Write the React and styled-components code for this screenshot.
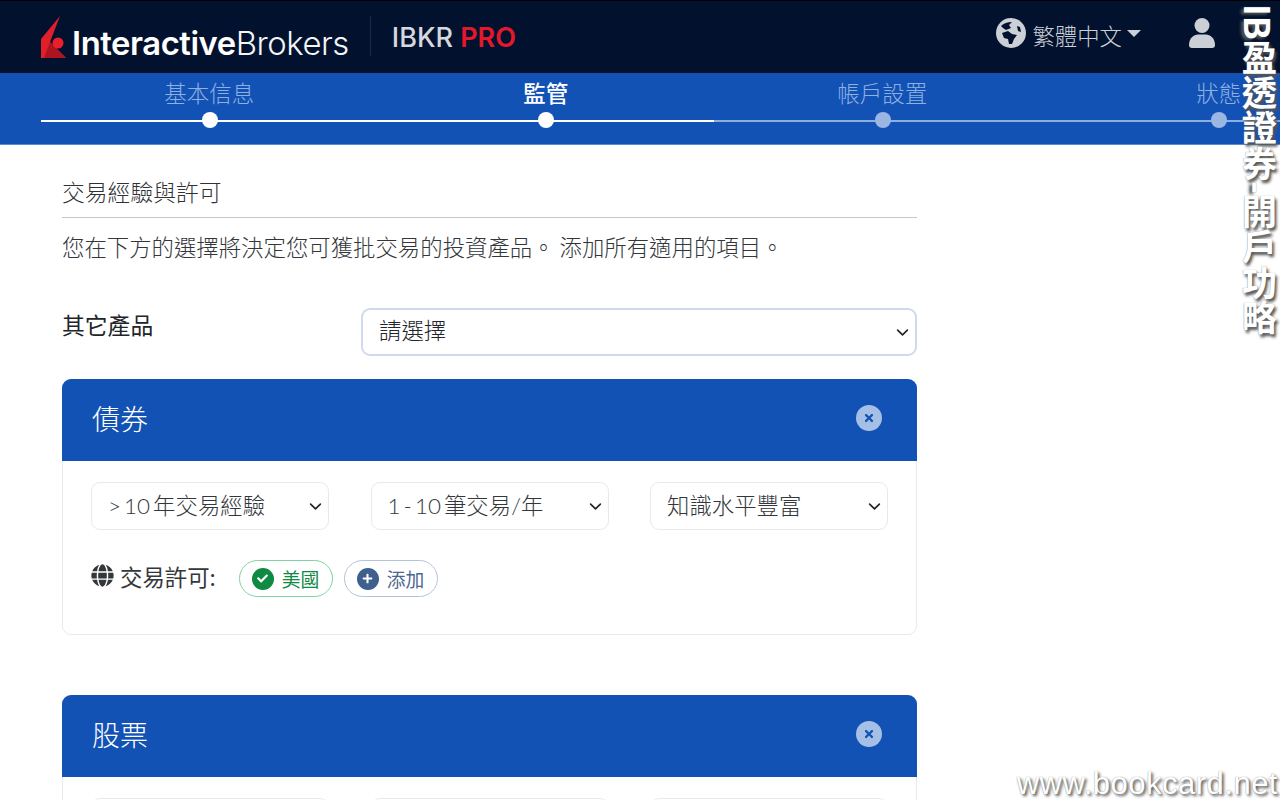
import React from "react";
import styled, { createGlobalStyle } from "styled-components";
import { FaGlobe, FaCheck, FaPlus, FaTimes } from "react-icons/fa";

const CJK = `"Noto Sans CJK TC", "Noto Sans CJK SC", sans-serif`;
const BODY = `Lato, "Noto Sans CJK TC", sans-serif`;
const CHEVRON = `url("data:image/svg+xml,%3csvg xmlns='http://www.w3.org/2000/svg' viewBox='0 0 16 16'%3e%3cpath fill='none' stroke='%23212529' stroke-linecap='round' stroke-linejoin='round' stroke-width='2' d='M2 5l6 6 6-6'/%3e%3c/svg%3e")`;

const STEPS = [
  { id: 0, label: "基本信息", done: true },
  { id: 1, label: "監管", done: true, active: true },
  { id: 2, label: "帳戶設置" },
  { id: 3, label: "狀態" },
];

const SECTIONS = [
  { id: 0, title: "債券", options: ["> 10 年交易經驗", "1 - 10 筆交易/年", "知識水平豐富"], body: true },
  { id: 1, title: "股票", options: ["> 10 年交易經驗", "1 - 10 筆交易/年", "知識水平豐富"] },
];

const App = () => {
  return (
    <Page>
      <GlobalStyle />
      <TopBar>
        <Logo>
          <LogoMark viewBox="0 0 25 43" aria-hidden="true">
            <path d="M19 0 L0 23 L0 42 L25 42 L9 26 Z" fill="#e11f2b" />
            <path d="M3 42 L9 26 L25 42 Z" fill="#ad1420" />
            <circle cx="17" cy="27" r="5.5" fill="#e8202c" />
          </LogoMark>
          <LogoText>
            <b>Interactive</b>Brokers
          </LogoText>
        </Logo>
        <Divider />
        <Product>
          IBKR <em>PRO</em>
        </Product>
        <TopActions>
          <Language>
            <svg width="30" height="30" viewBox="0 0 30 30" aria-hidden="true">
              <circle cx="15" cy="15" r="15" fill="currentColor" />
              <path d="M5 8 Q9 4 16 4 L13 7 L15 10 L10 12 L7 10 Z" fill="#02122e" />
              <path d="M6 15 L12 13 L16 16 L21 17 L18 21 L16 26 L13 26 L12 21 L8 20 Z" fill="#02122e" />
              <path d="M21 8 L24 9 L25 14 L22 13 Z" fill="#02122e" />
            </svg>
            <span>繁體中文</span>
            <Caret />
          </Language>
          <svg width="26" height="30" viewBox="0 0 26 30" aria-hidden="true">
            <circle cx="13" cy="7.5" r="7.5" fill="currentColor" />
            <path d="M0 27 C0 20 5 16.5 9 16.5 H17 C21 16.5 26 20 26 27 Q26 30 23 30 H3 Q0 30 0 27 Z" fill="currentColor" />
          </svg>
        </TopActions>
      </TopBar>

      <Stepper>
        {STEPS.map((step) => {
          return (
            <Step key={step.id} $done={step.done}>
              <StepLabel $done={step.done} $active={step.active}>{step.label}</StepLabel>
              <StepDot $done={step.done} />
            </Step>
          );
        })}
      </Stepper>

      <Content>
        <SectionTitle>交易經驗與許可</SectionTitle>
        <Intro>您在下方的選擇將決定您可獲批交易的投資產品。 添加所有適用的項目。</Intro>

        <ProductRow>
          <ProductLabel>其它產品</ProductLabel>
          <MainSelect defaultValue="請選擇">
            <option>請選擇</option>
          </MainSelect>
        </ProductRow>

        {SECTIONS.map((section) => {
          return (
            <Card key={section.id}>
              <CardHeader>
                <CardTitle>{section.title}</CardTitle>
                <CloseButton>
                  <FaTimes size={12} />
                </CloseButton>
              </CardHeader>
              <CardBody>
                <SelectRow>
                  {section.options.map((option) => {
                    return (
                      <CardSelect key={option} defaultValue={option}>
                        <option>{option}</option>
                      </CardSelect>
                    );
                  })}
                </SelectRow>
                {section.body && (
                  <PermitRow>
                    <FaGlobe size={23} />
                    <PermitLabel>交易許可:</PermitLabel>
                    <Pill $tone="green">
                      <PillIcon $tone="green"><FaCheck size={11} /></PillIcon>
                      美國
                    </Pill>
                    <Pill $tone="blue">
                      <PillIcon $tone="blue"><FaPlus size={11} /></PillIcon>
                      添加
                    </Pill>
                  </PermitRow>
                )}
              </CardBody>
            </Card>
          );
        })}
      </Content>

      <SideMark>IB盈透證券-開戶功略</SideMark>
      <SiteMark>www.bookcard.net</SiteMark>
    </Page>
  );
};

export default App;

const GlobalStyle = createGlobalStyle`
  html, body {
    margin: 0;
    padding: 0;
    background: #fff;
  }
  * {
    box-sizing: border-box;
  }
`;

const Page = styled.div`
  position: relative;
  width: 1280px;
  height: 800px;
  overflow: hidden;
  font-family: ${BODY};
  color: #212529;
`;

const TopBar = styled.header`
  display: flex;
  align-items: center;
  height: 73px;
  padding-left: 41px;
  background: #02122e;
  border-top: 1px solid #000;
`;

const Logo = styled.div`
  display: flex;
  align-items: flex-end;
  height: 44px;
  margin-top: 0;
`;

const LogoMark = styled.svg`
  width: 25px;
  height: 43px;
`;

const LogoText = styled.span`
  margin-left: 6px;
  font-family: Inter, "Liberation Sans", sans-serif;
  font-size: 32.8px;
  line-height: 32px;
  letter-spacing: -0.45px;
  color: #f4f5f7;
  font-weight: 300;

  b {
    font-weight: 600;
    color: #fff;
  }
`;

const Divider = styled.div`
  width: 1px;
  height: 40px;
  margin: -2px 21px 0;
  background: #1c2a44;
`;

const Product = styled.div`
  margin-top: 0;
  font-family: Inter, "Liberation Sans", sans-serif;
  font-size: 27px;
  font-weight: 500;
  color: #d5d8dd;

  em {
    font-style: normal;
    font-weight: 600;
    color: #e5182b;
  }
`;

const TopActions = styled.div`
  display: flex;
  align-items: center;
  margin-left: auto;
  margin-top: -8px;
  margin-right: 65px;
  color: #cbcfd6;
`;

const Language = styled.div`
  display: flex;
  align-items: center;
  margin-right: 48px;

  span {
    margin-left: 6px;
    margin-top: 4px;
    font-family: ${CJK};
    font-size: 22.4px;
    font-weight: 300;
  }
`;

const Caret = styled.i`
  width: 0;
  height: 0;
  margin-left: 5px;
  margin-top: 1px;
  border-left: 7px solid transparent;
  border-right: 7px solid transparent;
  border-top: 7px solid currentColor;
`;

const Stepper = styled.nav`
  display: grid;
  grid-template-columns: repeat(4, 336.5px);
  height: 72px;
  padding-left: 41px;
  background: #1352b5;
  border-bottom: 1px solid #5c8bd3;
`;

const Step = styled.div`
  position: relative;
  display: flex;
  flex-direction: column;
  align-items: center;
  padding-left: 1px;

  &::after {
    content: "";
    position: absolute;
    left: 0;
    right: 0;
    top: 47px;
    height: 2px;
    background: ${(p) => (p.$done ? "#fff" : "#8eaedf")};
  }
`;

const StepLabel = styled.div`
  margin-top: 3px;
  margin-right: 1px;
  font-family: ${CJK};
  font-size: 22.5px;
  line-height: 32px;
  font-weight: ${(p) => (p.$active ? 500 : 300)};
  color: ${(p) => (p.$active ? "#fff" : "#8fb0e2")};
`;

const StepDot = styled.span`
  position: relative;
  z-index: 1;
  width: 16px;
  height: 16px;
  margin-top: 4px;
  border-radius: 50%;
  background: ${(p) => (p.$done ? "#fff" : "#9ab7e3")};
`;

const Content = styled.main`
  width: 855px;
  margin-left: 62px;
`;

const SectionTitle = styled.h2`
  margin: 0;
  padding-top: 32px;
  padding-bottom: 10px;
  border-bottom: 1px solid #c4c6ca;
  font-family: ${CJK};
  font-size: 22.8px;
  line-height: 30px;
  font-weight: 300;
  color: #2f3235;
`;

const Intro = styled.p`
  margin: 12px 0 0;
  font-family: ${CJK};
  font-size: 22.4px;
  line-height: 32px;
  font-weight: 300;
  color: #33363a;
`;

const ProductRow = styled.div`
  display: flex;
  align-items: center;
  margin-top: 46px;
`;

const ProductLabel = styled.label`
  width: 299px;
  margin-top: -16px;
  font-family: ${CJK};
  font-size: 22.8px;
  color: #212529;
`;

const MainSelect = styled.select`
  flex: 1;
  height: 48px;
  padding: 0 16px 4px;
  appearance: none;
  border: 2px solid #d0daec;
  border-radius: 9px;
  background: #fff ${CHEVRON} no-repeat right 6px center / 13px 13px;
  font-family: ${BODY};
  font-size: 22.4px;
  font-weight: 300;
  color: #212529;
`;

const Card = styled.section`
  margin-top: 23px;
  margin-bottom: 60px;
  border: 1px solid #e8eaec;
  border-radius: 9px;
`;

const CardHeader = styled.div`
  display: flex;
  align-items: center;
  justify-content: space-between;
  height: 82px;
  margin: -1px -1px 0;
  padding: 0 35px 4px 30px;
  border-radius: 9px 9px 0 0;
  background: #1352b5;
`;

const CardTitle = styled.h3`
  margin: 0;
  font-family: ${CJK};
  font-size: 28px;
  font-weight: 300;
  color: #fff;
`;

const CloseButton = styled.button`
  display: flex;
  align-items: center;
  justify-content: center;
  width: 26px;
  height: 26px;
  padding: 0;
  border: 0;
  border-radius: 50%;
  background: #a6bfe6;
  color: #1352b5;
`;

const CardBody = styled.div`
  height: 173px;
  padding: 21px 28px;
`;

const SelectRow = styled.div`
  display: grid;
  grid-template-columns: repeat(3, 238px);
  justify-content: space-between;
`;

const CardSelect = styled.select`
  height: 48px;
  padding: 0 16px 2px;
  appearance: none;
  border: 1px solid #e7e9ec;
  border-radius: 9px;
  background: #fff ${CHEVRON} no-repeat right 6px center / 13px 13px;
  font-family: ${BODY};
  font-size: 22.4px;
  font-weight: 300;
  word-spacing: -3px;
  color: #33373b;
`;

const PermitRow = styled.div`
  display: flex;
  align-items: center;
  margin-top: 30px;
  color: #35383b;

  > svg {
    margin-top: -6px;
  }
`;

const PermitLabel = styled.span`
  margin-left: 6px;
  margin-right: 23px;
  margin-top: -5px;
  font-family: ${CJK};
  font-size: 22.4px;
  font-weight: 400;
`;

const Pill = styled.div`
  display: flex;
  align-items: center;
  width: 94px;
  height: 37px;
  margin-right: 11px;
  padding: 0 0 0 12px;
  border: 1px solid ${(p) => (p.$tone === "green" ? "#7fd3a2" : "#b5c3d9")};
  border-radius: 19px;
  font-family: ${CJK};
  font-size: 18.8px;
  font-weight: 400;
  color: ${(p) => (p.$tone === "green" ? "#0e8a43" : "#4c678f")};
`;

const PillIcon = styled.span`
  display: flex;
  align-items: center;
  justify-content: center;
  width: 22px;
  height: 22px;
  margin-right: 8px;
  border-radius: 50%;
  background: ${(p) => (p.$tone === "green" ? "#0e8a43" : "#3f5f8d")};
  color: #fff;
`;

const SideMark = styled.div`
  position: absolute;
  top: 4px;
  right: 3px;
  writing-mode: vertical-rl;
  font-family: "Noto Sans CJK TC", sans-serif;
  font-size: 35.3px;
  line-height: 36px;
  font-weight: 700;
  color: #fff;
  text-shadow: 2px 3px 3px #555, 0 0 1px #777;
`;

const SiteMark = styled.div`
  position: absolute;
  right: 2px;
  bottom: 0;
  font-family: "Liberation Sans", sans-serif;
  font-size: 31px;
  line-height: 32px;
  letter-spacing: 0.5px;
  font-weight: 400;
  color: #fff;
  text-shadow: 2px 2px 3px #555, 0 0 1px #888;
`;
